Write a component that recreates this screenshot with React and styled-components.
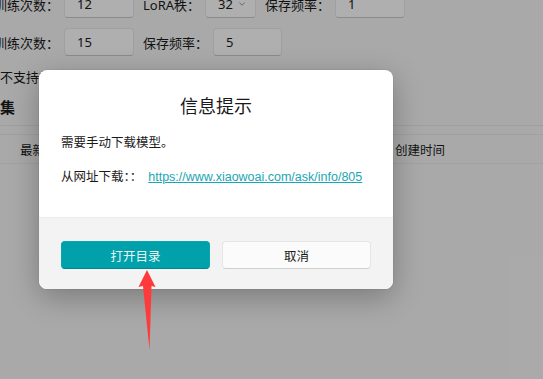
import styled, { createGlobalStyle } from "styled-components";
import { ChevronDown } from "lucide-react";

const GlobalStyle = createGlobalStyle`
  html, body {
    margin: 0;
    padding: 0;
    background: #f3f3f3;
  }
  body {
    font-family: "Noto Sans", "Noto Sans CJK SC", sans-serif;
    color: #1a1a1a;
  }
`;

const Page = styled.div`
  position: relative;
  width: 543px;
  height: 379px;
  overflow: hidden;
  background: #f3f3f3;
`;

const Settings = styled.div`
  display: flex;
  flex-direction: column;
  gap: 10px;
  margin: -10px 0 0 -6px;
`;

const Row = styled.div`
  display: flex;
  align-items: center;
  gap: 9px;
`;

const Field = styled.div`
  display: flex;
  align-items: center;
  gap: 5px;
`;

const Label = styled.span`
  font-size: 13px;
  white-space: nowrap;
`;

const Input = styled.div`
  box-sizing: border-box;
  width: ${(p) => p.$w || 70}px;
  height: 28px;
  padding: 0 8px 0 12px;
  display: flex;
  align-items: center;
  justify-content: space-between;
  background: #fbfbfb;
  border: 1px solid #e5e5e5;
  border-bottom-color: #c8c8c8;
  border-radius: 4px;
  font-size: 13px;
`;

const Note = styled.div`
  margin-top: 12px;
  font-size: 13px;
  line-height: 18px;
`;

const Section = styled.div`
  margin-top: 11px;
  font-size: 15px;
  font-weight: 600;
  line-height: 20px;
`;

const Table = styled.div`
  margin-top: 8px;
  border-top: 1px solid #e2e2e2;
  padding-top: 8px;
`;

const HeadRow = styled.div`
  display: flex;
  align-items: center;
  height: 28px;
  border-top: 1px solid #e6e6e6;
  border-bottom: 1px solid #e6e6e6;
  font-size: 12.5px;
`;

const HeadCell = styled.div`
  width: ${(p) => p.$w}px;
  padding-left: ${(p) => p.$pad || 0}px;
  box-sizing: border-box;
`;

const Overlay = styled.div`
  position: absolute;
  inset: 0;
  background: rgba(0, 0, 0, 0.3);
`;

const Dialog = styled.div`
  position: absolute;
  left: 39px;
  top: 70px;
  width: 354px;
  display: flex;
  flex-direction: column;
  border-radius: 8px;
  overflow: hidden;
  background: #ffffff;
  box-shadow: 0 8px 30px rgba(0, 0, 0, 0.28), 0 0 0 1px rgba(0, 0, 0, 0.04);
`;

const Body = styled.div`
  box-sizing: border-box;
  height: 147px;
  padding: 22px 22px 0;
`;

const Title = styled.div`
  text-align: center;
  font-size: 18px;
  line-height: 26px;
  font-family: "Noto Sans CJK SC", sans-serif;
`;

const Message = styled.div`
  margin-top: ${(p) => p.$top}px;
  font-size: 12.5px;
  line-height: 20px;
  white-space: nowrap;
`;

const Link = styled.a`
  margin-left: 6px;
  font-family: "Liberation Sans", sans-serif;
  font-size: 12.5px;
  color: #1ba6b3;
  text-decoration: underline;
`;

const Footer = styled.div`
  box-sizing: border-box;
  height: 72px;
  padding: 23px 22px 0;
  display: grid;
  grid-template-columns: 1fr 1fr;
  gap: 12px;
  background: #f3f3f3;
  border-top: 1px solid #ececec;
`;

const Button = styled.button`
  box-sizing: border-box;
  height: 28px;
  border-radius: 4px;
  font-family: "Noto Sans", "Noto Sans CJK SC", sans-serif;
  font-size: 12.5px;
  cursor: pointer;
  background: ${(p) => (p.$primary ? "#00a1aa" : "#fbfbfb")};
  color: ${(p) => (p.$primary ? "#e9f7f8" : "#1a1a1a")};
  border: 1px solid ${(p) => (p.$primary ? "#0aa5ae" : "#e5e5e5")};
  border-bottom-color: ${(p) => (p.$primary ? "#00858d" : "#cfcfcf")};
`;

const Arrow = styled.svg`
  position: absolute;
  left: 0;
  top: 0;
  pointer-events: none;
`;

const App = () => {
  return (
    <>
      <GlobalStyle />
      <Page>
        <Settings>
          <Row>
            <Field>
              <Label>训练次数：</Label>
              <Input>12</Input>
            </Field>
            <Field>
              <Label>LoRA秩：</Label>
              <Input $w={51}>
                32
                <ChevronDown size={10} strokeWidth={1.5} color="#555" />
              </Input>
            </Field>
            <Field>
              <Label>保存频率：</Label>
              <Input>1</Input>
            </Field>
          </Row>
          <Row>
            <Field>
              <Label>训练次数：</Label>
              <Input>15</Input>
            </Field>
            <Field>
              <Label>保存频率：</Label>
              <Input $w={69}>5</Input>
            </Field>
          </Row>
        </Settings>
        <Note>不支持斬新功能</Note>
        <Section>集</Section>
        <Table>
          <HeadRow>
            <HeadCell $w={395} $pad={20}>最新模型</HeadCell>
            <HeadCell $w={148}>创建时间</HeadCell>
          </HeadRow>
        </Table>

        <Overlay />

        <Dialog>
          <Body>
            <Title>信息提示</Title>
            <Message $top={15}>需要手动下载模型。</Message>
            <Message $top={14}>
              从网址下载：：
              <Link href="#">https://www.xiaowoai.com/ask/info/805</Link>
            </Message>
          </Body>
          <Footer>
            <Button $primary>打开目录</Button>
            <Button>取消</Button>
          </Footer>
        </Dialog>

        <Arrow width="543" height="379" viewBox="0 0 543 379">
          <polygon
            points="147,270 155.5,287 151.5,286 149.5,350 143,286 138.5,287"
            fill="#ff3a3a"
          />
        </Arrow>
      </Page>
    </>
  );
};

export default App;
